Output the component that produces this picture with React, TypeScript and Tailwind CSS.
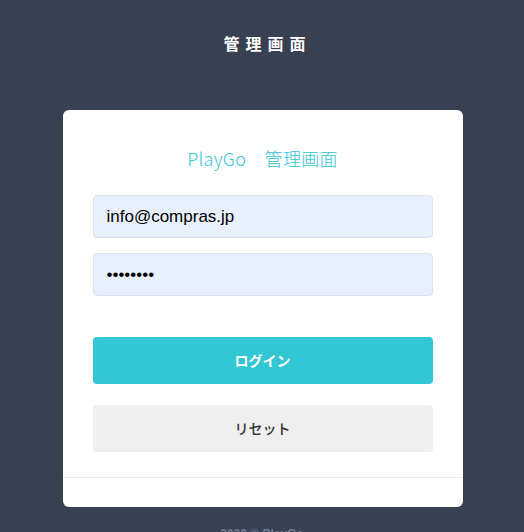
export default function App() {
  return (
    <div className="min-h-[532px] bg-[#374151] flex flex-col items-center overflow-hidden" style={{ fontFamily: '"Liberation Sans", "Noto Sans CJK JP", sans-serif' }}>
      <h1 className="mt-[34px] h-[22px] leading-[22px] text-[16px] font-bold text-white tracking-[6px] pl-[11px]">管理画面</h1>
      <div className="mt-[54px] ml-[1px] w-[400px] bg-white rounded-[6px]">
        <div className="px-[30px] pt-[36px] pb-[25px]">
          <h2 className="text-center text-[18px] leading-[24px] text-[#33c6d3] tracking-[0.3px]" style={{ fontFamily: '"Noto Sans CJK JP", sans-serif', fontWeight: 300 }}>PlayGo　管理画面</h2>
          <form className="mt-[25px] flex flex-col" onSubmit={e => e.preventDefault()}>
            <input
              type="text"
              defaultValue="info@compras.jp"
              className="h-[43px] w-full rounded-[4px] border border-[#dbe2ee] bg-[#e8f0fe] px-[13px] text-[17px] text-black outline-none"
            />
            <input
              type="password"
              defaultValue="password"
              className="mt-[15px] h-[43px] w-full rounded-[4px] border border-[#dbe2ee] bg-[#e8f0fe] px-[13px] text-[17px] text-black outline-none"
            />
            <button type="submit" className="mt-[41px] h-[47px] w-full rounded-[4px] bg-[#33c6d3] text-[14px] font-bold text-white" style={{ fontFamily: '"Noto Sans CJK JP", sans-serif' }}>ログイン</button>
            <button type="reset" className="mt-[21px] h-[47px] w-full rounded-[4px] bg-[#efefef] text-[14px] font-medium text-[#333]" style={{ fontFamily: '"Noto Sans CJK JP", sans-serif' }}>リセット</button>
          </form>
        </div>
        <div className="h-[30px] border-t border-[#e8e8e8]"></div>
      </div>
      <p className="mt-[18px] text-[12px] font-bold text-[#6f7b93]">2020 © PlayGo</p>
    </div>
  );
}
